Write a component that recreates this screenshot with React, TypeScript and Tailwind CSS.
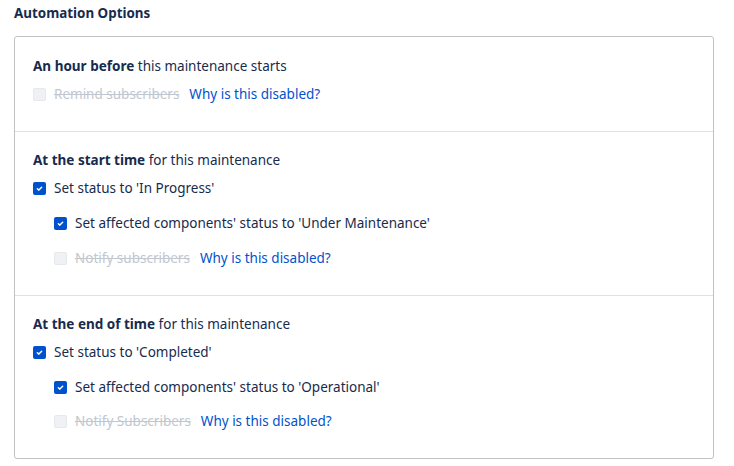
const Check = ({ checked, disabled }: { checked?: boolean; disabled?: boolean }) => {
  if (disabled) {
    return <span className="inline-block w-[13px] h-[13px] rounded-[2px] bg-[#f0f1f4] border border-[#e6e8ec] shrink-0" />;
  }
  return (
    <span className="inline-flex items-center justify-center w-[13px] h-[13px] rounded-[2px] bg-[#0052cc] shrink-0">
      {checked && (
        <svg width="9" height="9" viewBox="0 0 10 10" fill="none">
          <path d="M2.6 5.2 4.3 6.8 7.4 3.6" stroke="white" strokeWidth="1.6" strokeLinecap="round" strokeLinejoin="round" />
        </svg>
      )}
    </span>
  );
};

const Row = ({ label, checked, disabled, nested }: { label: string; checked?: boolean; disabled?: boolean; nested?: boolean }) => (
  <div className={`flex items-center h-5 ${nested ? 'pl-[21px]' : ''}`}>
    <Check checked={checked} disabled={disabled} />
    <span className={`ml-[8px] ${disabled ? 'text-[#c1c7d0] line-through' : 'text-[#172b4d]'}`}>{label}</span>
    {disabled && <a className="ml-[10px] text-[#0052cc]">Why is this disabled?</a>}
  </div>
);

const Title = ({ bold, rest }: { bold: string; rest: string }) => (
  <div className="h-5 flex items-center text-[#172b4d]">
    <span className="font-bold">{bold}</span>
    <span>&nbsp;{rest}</span>
  </div>
);

export default function App() {
  return (
    <div className="w-[734px] h-[466px] bg-white px-[14px] pt-[3px] text-[13.5px] font-['Noto_Sans',sans-serif] text-[#172b4d]">
      <h3 className="h-5 flex items-center font-bold text-[13.4px]">Automation Options</h3>
      <div className="mt-[13px] w-[700px] h-[423px] border border-[#c1c1c1] rounded-[3px] flex flex-col">
        <div className="h-[95px] border-b border-[#dfe1e6] pl-[18px] pt-[19px]">
          <Title bold="An hour before" rest="this maintenance starts" />
          <div className="mt-[8px]">
            <Row label="Remind subscribers" disabled />
          </div>
        </div>
        <div className="h-[164px] border-b border-[#dfe1e6] pl-[18px] pt-[18px]">
          <Title bold="At the start time" rest="for this maintenance" />
          <div className="mt-[8px]">
            <Row label="Set status to 'In Progress'" checked />
          </div>
          <div className="mt-[15px]">
            <Row label="Set affected components' status to 'Under Maintenance'" checked nested />
          </div>
          <div className="mt-[15px]">
            <Row label="Notify subscribers" disabled nested />
          </div>
        </div>
        <div className="flex-1 pl-[18px] pt-[18px]">
          <Title bold="At the end of time" rest="for this maintenance" />
          <div className="mt-[8px]">
            <Row label="Set status to 'Completed'" checked />
          </div>
          <div className="mt-[15px]">
            <Row label="Set affected components' status to 'Operational'" checked nested />
          </div>
          <div className="mt-[14px]">
            <Row label="Notify Subscribers" disabled nested />
          </div>
        </div>
      </div>
    </div>
  );
}
